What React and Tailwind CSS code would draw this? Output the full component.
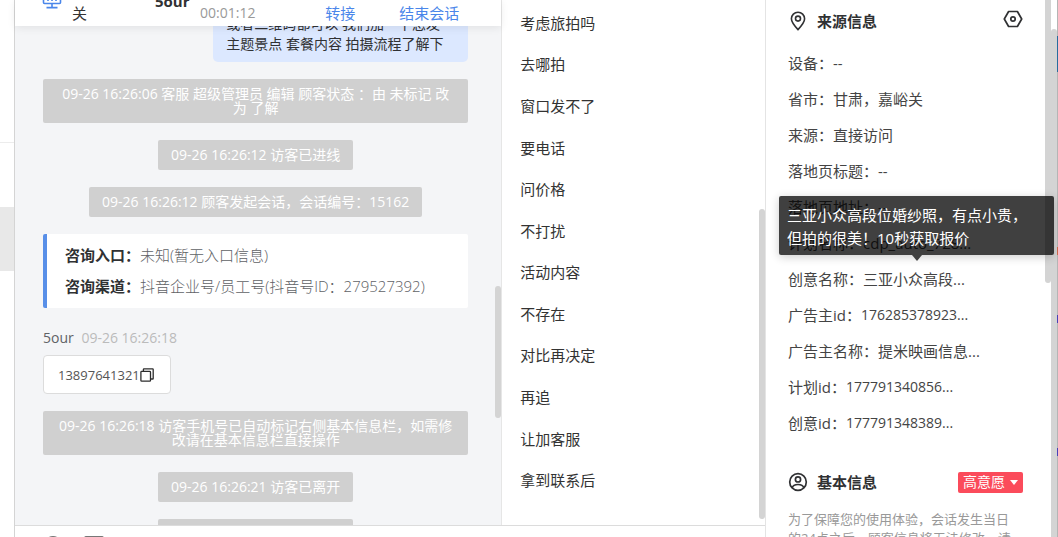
function Monitor() {
  return (
    <svg width="20" height="20" viewBox="0 0 20 20" fill="none" stroke="#4a86ea" strokeWidth="1.6">
      <rect x="1.5" y="2" width="17" height="12.5" rx="1" />
      <path d="M6 8v4M10 7v5M14 8v4M10 14.5v3.5M4.5 18.6h11" />
    </svg>
  );
}

function CopyIcon() {
  return (
    <svg width="14" height="14" viewBox="0 0 14 14" fill="none" stroke="#2c2c2c" strokeWidth="1.3">
      <rect x="0.9" y="3.4" width="9.6" height="9.8" rx="0.8" />
      <path d="M3.4 3.2V1.4q0-.6.6-.6h8.6q.6 0 .6.6v9q0 .6-.6.6h-1.8" />
    </svg>
  );
}

function PinIcon() {
  return (
    <svg width="16" height="20" viewBox="0 0 16 20" fill="none" stroke="#303133" strokeWidth="1.6">
      <path d="M8 18.6C5 15.4 1.4 11.4 1.4 7.8a6.6 6.6 0 0 1 13.2 0c0 3.6-3.6 7.6-6.6 10.8z" />
      <circle cx="8" cy="7.6" r="2.5" />
    </svg>
  );
}

function HexIcon() {
  return (
    <svg width="20" height="18" viewBox="0 0 20 18" fill="none" stroke="#303133" strokeWidth="1.7" strokeLinejoin="round">
      <path d="M5.6 1.5h8.8L18.7 9l-4.3 7.5H5.6L1.3 9z" />
      <circle cx="10" cy="9" r="2.2" />
    </svg>
  );
}

function PersonIcon() {
  return (
    <svg width="20" height="20" viewBox="0 0 20 20" fill="none" stroke="#303133" strokeWidth="1.7">
      <circle cx="10" cy="10" r="8.3" />
      <circle cx="10" cy="7.4" r="2.6" />
      <path d="M4.2 15.8c.6-2.3 2.2-3.3 5.8-3.3s5.2 1 5.8 3.3" />
    </svg>
  );
}

function Notice({ children }) {
  return (
    <p className="self-center rounded-xs bg-[#d0d0d0] px-[13px] py-2 text-center text-sm/[14px] text-white">
      {children}
    </p>
  );
}

function Thumb({ className }) {
  return <div aria-hidden="true" className={`absolute w-1.5 rounded-full bg-[#d4d4d4] ${className}`} />;
}

const replies = [
  "考虑旅拍吗", "去哪拍", "窗口发不了", "要电话", "问价格", "不打扰",
  "活动内容", "不存在", "对比再决定", "再追", "让加客服", "拿到联系后",
];

const source = [
  ["设备", "--"],
  ["省市", "甘肃，嘉峪关"],
  ["来源", "直接访问"],
  ["落地页标题", "--"],
  ["落地页地址", "--"],
  ["计划名称", "cdp_auto_728..."],
  ["创意名称", "三亚小众高段...", "三亚小众高段位婚纱照，有点小贵，但拍的很美！10秒获取报价"],
  ["广告主id", "176285378923..."],
  ["广告主名称", "提米映画信息..."],
  ["计划id", "177791340856..."],
  ["创意id", "177791348389..."],
];

function ChatHeader() {
  return (
    <header className="relative z-10 shrink-0 bg-white text-sm/5 shadow-[0_2px_8px_rgba(0,0,0,0.08)]">
      <div className="flex h-[26px] items-end overflow-hidden pb-[3px] pl-[27px]">
        <div className="pb-[14px]"><Monitor /></div>
        <span className="w-[93px] pl-[10px] text-[15px]/5 text-[#333]">关</span>
        <strong className="w-[45px] pb-[12px] text-[15px]/5 font-bold text-[#303133]">5our</strong>
        <span className="flex-1 text-[#999]">00:01:12</span>
        <button type="button" className="mr-11 text-[15px]/5 text-[#4a86ea]">转接</button>
        <button type="button" className="mr-[42px] text-[15px]/5 text-[#4a86ea]">结束会话</button>
      </div>
    </header>
  );
}

function Chat() {
  return (
    <section className="relative flex min-w-0 flex-[487] flex-col border-r border-[#e6e6e6] bg-[#f4f5f7]">
      <ChatHeader />
      <div className="min-h-0 flex-1 overflow-hidden">
        <div className="-mt-4 flex flex-col gap-[17px] pr-[33px] pl-7">
          <p className="w-[255px] self-end rounded-[5px] bg-[#dce8ff] px-[13px] pt-1 pb-2 text-sm/5 text-[#303133]">
            或者二维码都可以 我们加一下您发
            <br />
            主题景点 套餐内容 拍摄流程了解下
          </p>
          <Notice>09-26 16:26:06 客服 超级管理员 编辑 顾客状态 ：由 未标记 改为 了解</Notice>
          <Notice>09-26 16:26:12 访客已进线</Notice>
          <Notice>09-26 16:26:12 顾客发起会话，会话编号：15162</Notice>
          <dl className="flex flex-col gap-[7px] rounded-xs border-l-4 border-[#588fe8] bg-white pt-[9px] pb-[10px] pl-[18px] text-[15px]/6 text-[#606266]">
            <div className="flex">
              <dt className="font-bold text-[#303133]">咨询入口：</dt>
              <dd className="font-light">未知(暂无入口信息)</dd>
            </div>
            <div className="flex">
              <dt className="font-bold text-[#303133]">咨询渠道：</dt>
              <dd className="font-light">抖音企业号/员工号(抖音号ID：279527392)</dd>
            </div>
          </dl>
          <div className="flex flex-col items-start gap-[7px] pt-[3px] text-sm/5">
            <p className="text-[#606266]">
              5our <time className="ml-1 text-[#bbb]">09-26 16:26:18</time>
            </p>
            <div className="flex h-[39px] items-center rounded border border-[#dcdcdc] bg-white pr-4 pl-[14px]">
              <span className="text-[13px]/5 text-[#555]">13897641321</span>
              <button type="button" aria-label="复制"><CopyIcon /></button>
            </div>
          </div>
          <Notice>09-26 16:26:18 访客手机号已自动标记右侧基本信息栏，如需修改请在基本信息栏直接操作</Notice>
          <Notice>09-26 16:26:21 访客已离开</Notice>
          <Notice>09-26 16:26:21 访客已离开</Notice>
        </div>
      </div>
      <Thumb className="top-[286px] right-0 h-[132px]" />
    </section>
  );
}

function QuickReplies() {
  return (
    <section className="relative min-w-0 flex-[263] overflow-hidden pt-0.5">
      <ul className="grid h-[499px] auto-rows-fr items-center px-[18px] text-[15px]/5 text-[#333]">
        {replies.map((text) => (
          <li key={text}>{text}</li>
        ))}
      </ul>
      <Thumb className="top-[209px] right-0 h-[310px]" />
    </section>
  );
}

function Composer() {
  return (
    <footer className="flex h-3 shrink-0 gap-[22px] overflow-hidden border-t border-[#dcdcdc] pt-[10px] pl-[29px]">
      <svg className="shrink-0" width="18" height="18" viewBox="0 0 18 18" fill="none" stroke="#777" strokeWidth="1.6"><circle cx="9" cy="9" r="8.2" /></svg>
      <svg className="shrink-0" width="20" height="18" viewBox="0 0 20 18" fill="none" stroke="#777" strokeWidth="1.6"><rect x="1" y="0.8" width="18" height="16" rx="1" /></svg>
    </footer>
  );
}

function Details() {
  return (
    <aside className="relative w-[292px] shrink-0 overflow-hidden pl-[22px]">
      <div className="mr-[35px] flex h-[45px] items-center pb-[3px]">
        <span className="flex w-[29px] pl-0.5"><PinIcon /></span>
        <h2 className="flex-1 text-[15px]/5 font-bold text-[#303133]">来源信息</h2>
        <button type="button" aria-label="设置" className="pb-1"><HexIcon /></button>
      </div>
      <dl className="text-[15px]/5 text-[#444]">
        {source.map(([label, value, tip]) => (
          <div key={label} className="relative flex h-9 items-center">
            <dt>{label}：</dt>
            <dd className={/^\d/.test(value) ? "text-sm/5" : ""}>{value}</dd>
            {tip && (
              <div role="tooltip" className="absolute right-1 bottom-full -left-[9px] z-20 mb-[6px] rounded-xs bg-black/75 pt-2 pr-4 pb-[5px] pl-2 text-[15px]/[23px] text-white shadow-[0_2px_10px_rgba(0,0,0,0.2)]">
                {tip}
                <svg className="absolute top-full left-[133px]" width="10" height="6" viewBox="0 0 10 6" fill="#404040"><path d="M0 0h10L5 6z" /></svg>
              </div>
            )}
          </div>
        ))}
      </dl>
      <div className="mt-[29px] mr-[35px] flex h-6 items-center">
        <span className="flex w-[29px]"><PersonIcon /></span>
        <h2 className="flex-1 text-[15px]/5 font-bold text-[#303133]">基本信息</h2>
        <button type="button" className="flex h-[21px] items-center gap-[5px] rounded-xs bg-[#fb4b5b] px-[5px] text-sm/5 text-white">
          高意愿
          <svg width="8" height="5" viewBox="0 0 8 5" fill="currentColor"><path d="M0 0h8L4 5z" /></svg>
        </button>
      </div>
      <p className="mt-4 w-[230px] text-[13px]/[19px] text-[#999]">
        为了保障您的使用体验，会话发生当日的24点之后，顾客信息将无法修改，请
      </p>
      <Thumb className="-top-1 right-[7px] h-[287px]" />
      <Thumb className="top-[29px] right-px h-[520px]" />
      <div aria-hidden="true" className="absolute top-0 right-0 flex h-full w-px flex-col bg-[#b5b5b5]">
        <i className="mt-9 h-9 bg-[#286c9e]" />
        <i className="mt-[175px] h-2 bg-[#d36a4e]" />
        <i className="mt-[60px] h-2 bg-[#4940b8]" />
        <i className="mt-[125px] h-2 bg-[#4940b8]" />
      </div>
    </aside>
  );
}

export default function App() {
  return (
    <div className="flex h-screen overflow-hidden bg-white font-['Open_Sans','Noto_Sans_CJK_SC',sans-serif]">
      <div className="flex w-[15px] shrink-0 flex-col border-r border-[#d4d4d4]">
        <div className="h-[143px] border-b border-[#ececec]" />
        <div className="mt-16 h-16 bg-[#e8e8e8]" />
      </div>
      <main className="flex min-w-0 flex-1 flex-col border-r border-[#e4e4e4]">
        <div className="flex min-h-0 flex-1">
          <Chat />
          <QuickReplies />
        </div>
        <Composer />
      </main>
      <Details />
    </div>
  );
}
